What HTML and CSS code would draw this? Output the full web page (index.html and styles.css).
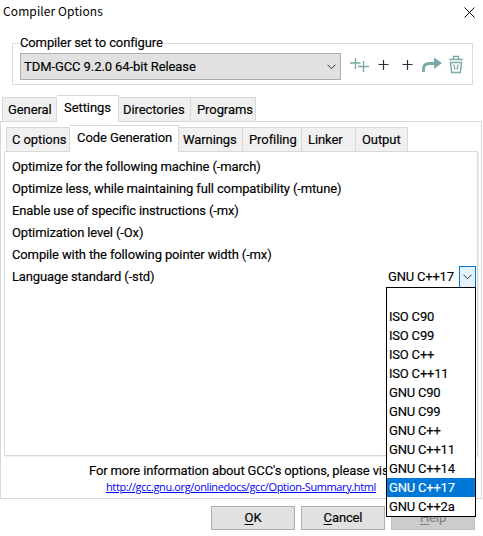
FILE: index.html
```
<!DOCTYPE html>
<html lang="en">
<head>
<meta charset="utf-8">
<title>Compiler Options</title>
<link rel="stylesheet" href="styles.css">
</head>
<body>
<div class="dialog">
  <header class="titlebar">
    <h1>Compiler Options</h1>
    <svg class="close" width="11" height="11" viewBox="0 0 11 11"><path d="M.5.5l10 10M10.5.5l-10 10"/></svg>
  </header>
  <fieldset class="group">
    <legend>Compiler set to configure</legend>
    <div class="combo"><span>TDM-GCC 9.2.0 64-bit Release</span>
      <svg width="9" height="6" viewBox="0 0 9 6"><path d="M.5.7l4 4 4-4"/></svg></div>
    <div class="tools">
      <svg width="115" height="20" viewBox="0 0 115 20">
        <path class="teal" d="M5.500 3v11M0 8h10.500M13.500 6v11M8 11.500h11"/>
        <path class="navy" d="M33.500 5v10M28.500 9.500h10M57.500 5v10M52.500 9.500h10"/>
        <path class="arrow" d="M73.500 17v-3q0-5.500 6-5.500h6"/>
        <path class="tealfill" d="M84 2.500l8 5.500-8 6z"/>
        <path class="bin" d="M99 4.500h14M103.500 4V1.500h5v3M100.500 7.500h11l-1.200 10h-8.600zM104 9.500l.8 5M108 9.500l-.8 5"/>
      </svg>
    </div>
  </fieldset>
  <nav class="tabs outer">
    <div class="tab general">General</div><div class="tab settings active">Settings</div><div class="tab directories">Directories</div><div class="tab programs">Programs</div>
  </nav>
  <main class="panel">
    <nav class="tabs inner">
      <div class="tab coptions">C options</div><div class="tab codegen active">Code Generation</div><div class="tab warnings">Warnings</div><div class="tab profiling">Profiling</div><div class="tab linker">Linker</div><div class="tab output">Output</div>
    </nav>
    <section class="options">
      <div class="row"><span>Optimize for the following machine (-march)</span></div>
      <div class="row"><span>Optimize less, while maintaining full compatibility (-mtune)</span></div>
      <div class="row"><span>Enable use of specific instructions (-mx)</span></div>
      <div class="row"><span>Optimization level (-Ox)</span></div>
      <div class="row"><span>Compile with the following pointer width (-mx)</span></div>
      <div class="row"><span>Language standard (-std)</span>
        <div class="value"><span>GNU C++17</span>
          <div class="drop"><svg width="9" height="6" viewBox="0 0 9 6"><path d="M.5.7l4 4 4-4"/></svg></div>
          <ul class="menu">
            <li></li><li>ISO C90</li><li>ISO C99</li><li>ISO C++</li><li>ISO C++11</li><li>GNU C90</li><li>GNU C99</li><li>GNU C++</li><li>GNU C++11</li><li>GNU C++14</li><li class="selected">GNU C++17</li><li>GNU C++2a</li>
          </ul>
        </div>
      </div>
    </section>
    <footer class="info">
      <p>For more information about GCC's options, please vis</p>
      <a>http://gcc.gnu.org/onlinedocs/gcc/Option-Summary.html</a>
    </footer>
  </main>
  <div class="buttons">
    <button><span><u>O</u>K</span></button><button><span><u>C</u>ancel</span></button><button disabled><span><u>H</u>elp</span></button>
  </div>
</div>
</body>
</html>
```
FILE: styles.css
```
* { box-sizing: border-box; }
body { margin: 0; background: #fff; color: #000; font: 13px/16px Roboto, sans-serif; letter-spacing: -.13px; -webkit-text-stroke: .15px currentColor; overflow: hidden; }
h1, p, ul { margin: 0; padding: 0; font: inherit; list-style: none; }
svg { display: block; fill: none; stroke: #333; }
.dialog { width: 483px; height: 536px; display: flex; flex-direction: column; white-space: nowrap; }
.titlebar { height: 35px; padding: 3px 8px 0 3px; display: flex; justify-content: space-between; }
.titlebar h1 { font-family: "Noto Sans CJK TC", sans-serif; font-size: 12px; letter-spacing: .1px; -webkit-text-stroke: 0; }
.close { margin-top: 4px; stroke: #000; }
.group { width: 461px; height: 50px; margin: 0 0 0 12px; padding: 2px 0 0 7px; border: 1px solid #dcdcdc; display: flex; }
.group legend { padding: 0; }
.combo { width: 321px; height: 27px; background: #e1e1e1; border: 1px solid #adadad; display: flex; align-items: center; justify-content: space-between; padding: 0 4px 0 3px; letter-spacing: -.08px; }
.tools { margin: 2px 0 0 9px; }
.tools .teal { stroke: #7aaaa7; stroke-width: 1.4; }
.navy { stroke: #303045; stroke-width: 1.2; }
.arrow { stroke: #7aaaa7; stroke-width: 2.8; }
.tealfill { fill: #7aaaa7; stroke: none; }
.bin { stroke: #7aaaa7; stroke-width: 1.4; }
.tabs { display: flex; align-items: flex-end; position: relative; }
.tab { height: 24px; background: #f0f0f0; border: 1px solid #d9d9d9; border-width: 1px 1px 0 0; padding: 4px 0 0 5px; }
.tab:first-child { border-left-width: 1px; }
.tab.active { height: 27px; margin-bottom: -1px; background: #fff; padding-left: 7px; }
.outer { height: 26px; margin: 10px 0 0 2px; z-index: 1; letter-spacing: -.08px; }
.general { width: 55px; } .settings { width: 62px; } .tab.directories { width: 72px; padding-left: 4px; } .programs { width: 65px; padding-left: 6px; }
.panel { height: 378px; width: 482px; border: 1px solid #d9d9d9; padding: 3px 3px 0; }
.inner { height: 26px; margin-left: 2px; z-index: 1; letter-spacing: -.08px; }
.coptions { width: 64px; } .codegen { width: 109px; } .tab.warnings { width: 64px; padding-left: 4px; } .profiling { width: 59px; padding-left: 6px; } .linker { width: 54px; padding-left: 6px; } .output { width: 52px; padding-left: 6px; }
.options { width: 474px; height: 305px; border: 1px solid #d9d9d9; padding: 4px 0 0 7px; box-shadow: 1px 1px #eee; }
.row { height: 22px; display: flex; justify-content: space-between; padding-top: 3px; }
.value { position: relative; width: 90px; height: 22px; display: flex; justify-content: space-between; margin-right: 1px; padding-left: 2px; letter-spacing: -.2px; }
.drop { width: 17px; height: 22px; margin-top: -3px; border: 1px solid #0078d7; background: #e5f1fb; display: flex; align-items: center; justify-content: center; }
.menu { position: absolute; z-index: 5; left: 0; top: 18px; width: 90px; height: 230px; border: 1px solid #000; background: #fff; }
.menu li { height: 19px; padding: 2px 0 0 2px; }
.menu .selected { color: #fff; background: #0078d7; }
.info { padding: 7px 0 0 85px; }
.info a { display: block; width: max-content; margin-left: 17px; font: 11px/16px "Open Sans", sans-serif; letter-spacing: -.38px; color: #00f; text-decoration: underline; -webkit-text-stroke: 0; }
.buttons { display: flex; gap: 6px; margin: 7px 0 0 211px; }
button { width: 84px; height: 24px; border: 1px solid #adadad; background: #e1e1e1; padding: 0; font: inherit; letter-spacing: inherit; color: #000; }
button:disabled { background: #ccc; border-color: #bfbfbf; color: #838383; }
u { text-underline-offset: 2px; }
```
